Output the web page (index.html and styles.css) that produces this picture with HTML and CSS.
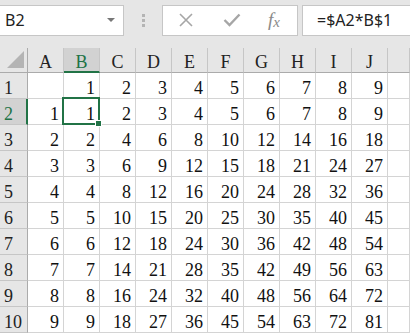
FILE: index.html
```html
<!DOCTYPE html>
<html lang="en">
<head>
    <meta charset="UTF-8">
    <title>Sheet1</title>
    <link rel="stylesheet" href="styles.css">
</head>
<body>
    <div class="toolbar">
        <div class="name-box">
            <span>B2</span>
            <span class="drop"></span>
        </div>
        <div class="grip"><i></i><i></i><i></i></div>
        <div class="buttons">
            <svg class="icon" width="16" height="14" viewBox="0 0 16 14">
                <path d="M2 1 L14 13 M14 1 L2 13" stroke="#a6a6a6" stroke-width="1.6" fill="none"/>
            </svg>
            <svg class="icon" width="18" height="14" viewBox="0 0 18 14">
                <path d="M1.5 7 L6.5 12 L16.5 1.5" stroke="#a6a6a6" stroke-width="2.4" fill="none"/>
            </svg>
            <span class="fx">f<sub>x</sub></span>
        </div>
        <div class="formula">=$A2*B$1</div>
    </div>

    <!-- cells get filled in below -->
    <div class="sheet" id="sheet"></div>

    <script>
        const sheet = document.getElementById('sheet');
        const cols = ['A', 'B', 'C', 'D', 'E', 'F', 'G', 'H', 'I', 'J'];

        function cell(cls, text) {
            const div = document.createElement('div');
            div.className = cls;
            div.textContent = text;
            sheet.appendChild(div);
        }

        cell('corner', '');
        cols.forEach(c => cell(c === 'B' ? 'col-head active' : 'col-head', c));
        cell('col-head', '');

        for (let r = 1; r <= 10; r++) {
            cell(r === 2 ? 'row-head active' : 'row-head', r);
            for (let c = 0; c < 10; c++) {
                let val;
                if (c === 0) val = r === 1 ? '' : r - 1;
                else val = r === 1 ? c : (r - 1) * c;
                let cls = 'cell';
                if (r === 2 && c === 1) cls += ' selected';
                cell(cls, val);
            }
            cell('cell', '');
        }
    </script>
</body>
</html>
```

FILE: styles.css
```css
body {
    margin: 0;
    width: 410px;
    height: 333px;
    overflow: hidden;
    background-color: #fff;
}
.toolbar {
    display: flex;
    align-items: center;
    height: 48px;
    padding-bottom: 8px;
    box-sizing: border-box;
    background-color: #e6e6e6;
    font-family: "Noto Sans", sans-serif;
    font-size: 16px;
    color: #222;
}
.name-box {
    display: flex;
    align-items: center;
    justify-content: space-between;
    width: 124px;
    height: 31px;
    box-sizing: border-box;
    padding: 0 8px 0 5px;
    background-color: #fff;
    border: 1px solid #c6c6c6;
    border-left: none;
}
.drop {
    width: 0;
    height: 0;
    border-left: 4px solid transparent;
    border-right: 4px solid transparent;
    border-top: 4px solid #777;
}
.grip {
    display: flex;
    flex-direction: column;
    gap: 2px;
    margin: 0 17px 0 18px;
}
.grip i {
    display: block;
    width: 3px;
    height: 3px;
    background-color: #b4b4b4;
}
.buttons {
    display: flex;
    align-items: center;
    width: 136px;
    height: 31px;
    box-sizing: border-box;
    padding-left: 15px;
    background-color: #fff;
    border: 1px solid #c6c6c6;
}
.buttons .icon {
    margin-right: 29px;
}
.buttons .icon + .icon {
    margin-right: 27px;
}
.fx {
    font-family: "Liberation Serif", serif;
    font-style: italic;
    font-size: 19px;
    color: #8a8a8a;
    line-height: 1;
}
.fx sub {
    font-size: 15px;
    vertical-align: -1px;
}
.formula {
    flex: 1;
    height: 31px;
    line-height: 29px;
    box-sizing: border-box;
    margin-left: 4px;
    padding-left: 14px;
    background-color: #fff;
    border: 1px solid #c6c6c6;
    border-right: none;
}
.sheet {
    display: grid;
    grid-template-columns: 28px repeat(10, 36px) 1fr;
    grid-template-rows: 25px;
    grid-auto-rows: 26px;
    font-family: "Liberation Serif", serif;
    font-size: 18px;
    color: #111;
}
.sheet > div {
    box-sizing: border-box;
    line-height: 22px;
}
.corner {
    position: relative;
    background-color: #e6e6e6;
    border-right: 1px solid #ababab;
    border-bottom: 1px solid #ababab;
}
.corner::after {
    content: "";
    position: absolute;
    right: 3px;
    bottom: 4px;
    width: 0;
    height: 0;
    border-left: 17px solid transparent;
    border-bottom: 17px solid #b4b4b4;
}
.col-head {
    background-color: #e6e6e6;
    border-right: 1px solid #c6c6c6;
    border-bottom: 1px solid #ababab;
    text-align: center;
    padding-top: 3px;
    color: #222;
}
.col-head.active {
    background-color: #d2d2d2;
    border-bottom: 2px solid #217346;
    color: #217346;
}
.row-head {
    background-color: #e6e6e6;
    border-right: 1px solid #ababab;
    border-bottom: 1px solid #c6c6c6;
    padding-left: 4px;
    padding-top: 4px;
    color: #222;
}
.row-head.active {
    background-color: #d2d2d2;
    border-right: 2px solid #217346;
    color: #217346;
}
.cell {
    border-right: 1px solid #d4d4d4;
    border-bottom: 1px solid #d4d4d4;
    text-align: right;
    padding-right: 4px;
    padding-top: 4px;
}
.selected {
    position: relative;
}
.selected::after {
    content: "";
    position: absolute;
    top: -2px;
    left: -2px;
    right: -1px;
    bottom: -1px;
    border: 2px solid #217346;
}
.selected::before {
    content: "";
    position: absolute;
    right: -3px;
    bottom: -3px;
    width: 5px;
    height: 5px;
    background-color: #217346;
    border: 1px solid #fff;
    z-index: 1;
}
```
